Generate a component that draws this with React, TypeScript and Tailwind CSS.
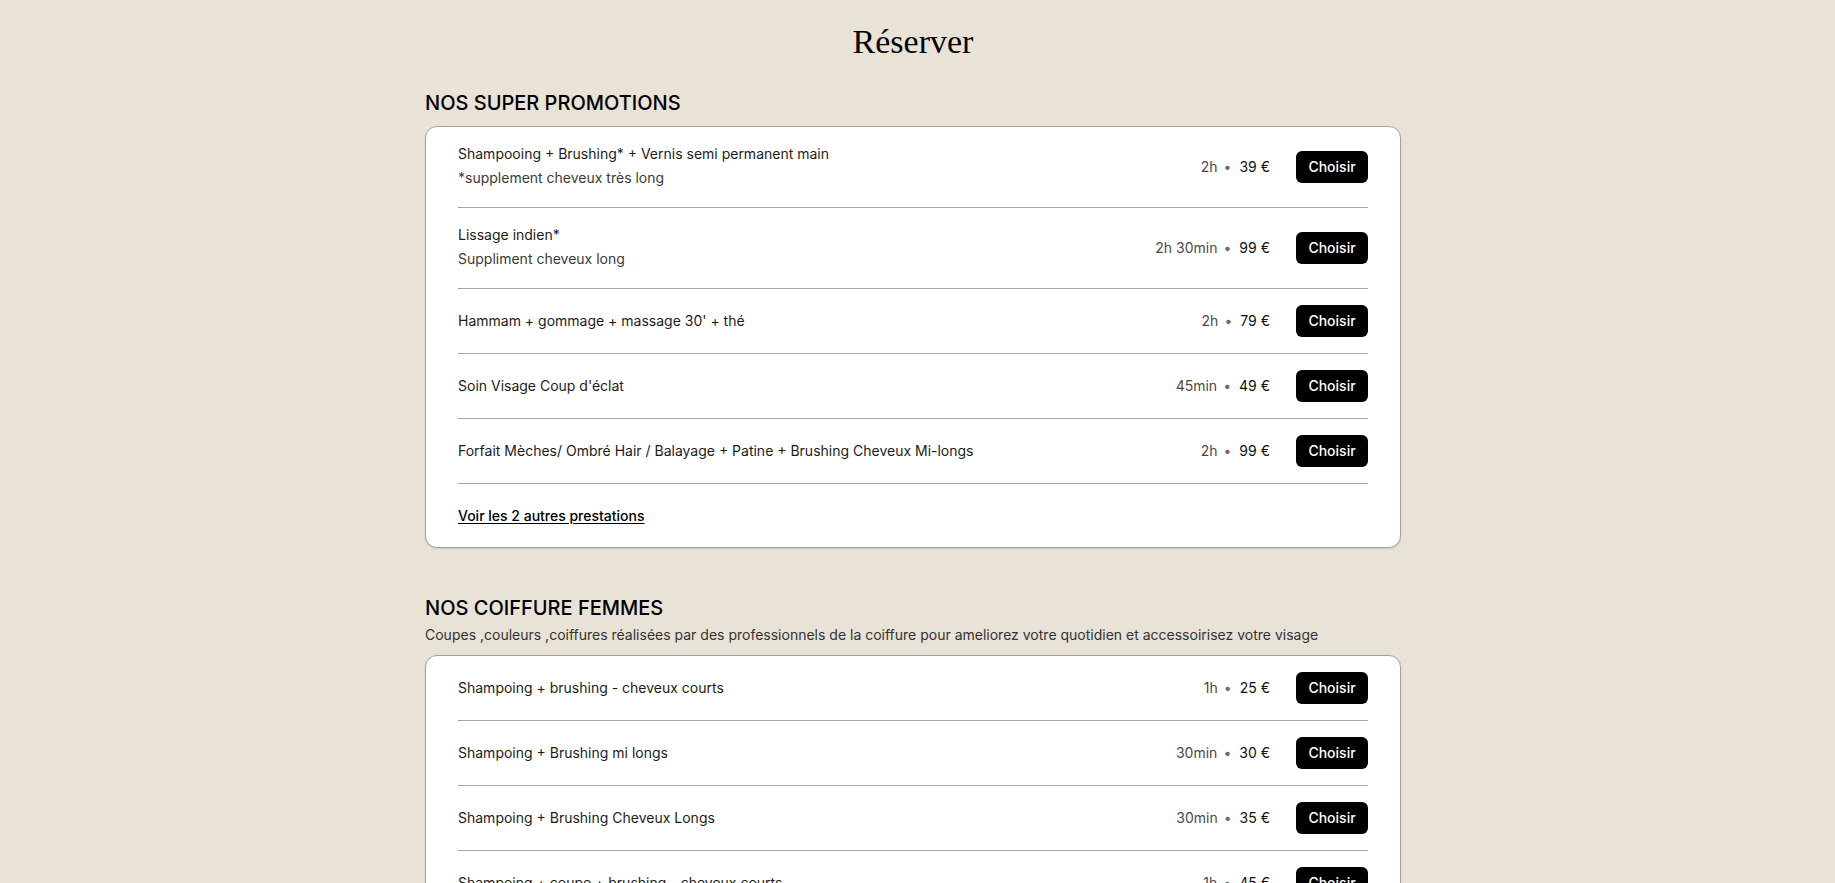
import React from "react";

interface Service {
  name: string;
  note?: string;
  duration: string;
  price: string;
}

const promos: Service[] = [
  {
    name: "Shampooing + Brushing* + Vernis semi permanent main",
    note: "*supplement cheveux très long",
    duration: "2h",
    price: "39 €",
  },
  {
    name: "Lissage indien*",
    note: "Suppliment cheveux long",
    duration: "2h 30min",
    price: "99 €",
  },
  { name: "Hammam + gommage + massage 30' + thé", duration: "2h", price: "79 €" },
  { name: "Soin Visage Coup d'éclat", duration: "45min", price: "49 €" },
  {
    name: "Forfait Mèches/ Ombré Hair / Balayage + Patine + Brushing Cheveux Mi-longs",
    duration: "2h",
    price: "99 €",
  },
];

const femmes: Service[] = [
  { name: "Shampoing + brushing - cheveux courts", duration: "1h", price: "25 €" },
  { name: "Shampoing + Brushing mi longs", duration: "30min", price: "30 €" },
  { name: "Shampoing + Brushing Cheveux Longs", duration: "30min", price: "35 €" },
  { name: "Shampoing + coupe + brushing - cheveux courts", duration: "1h", price: "45 €" },
  { name: "Shampoing + coupe + brushing - cheveux mi longs", duration: "1h", price: "55 €" },
  { name: "Shampoing + coupe + brushing - cheveux longs", duration: "1h 30min", price: "65 €" },
];

const Row = ({ s }: { s: Service }) => (
  <div className="flex items-center justify-between py-4 border-b border-[#a6a6a6]">
    {s.note ? (
      <div className="pt-px pb-[3px]">
        <div className="text-sm leading-5 text-[#1c1c1c]">{s.name}</div>
        <div className="mt-1 text-sm leading-5 text-[#3a3a3a]">{s.note}</div>
      </div>
    ) : (
      <div className="text-sm leading-5 text-[#1c1c1c]">{s.name}</div>
    )}
    <div className="flex items-center gap-[26px]">
      <div className="flex items-center text-sm leading-5">
        <span className="text-[#4a4a4a]">{s.duration}</span>
        <span className="ml-[6px] mr-[8px] text-[#6b6b6b]">•</span>
        <span className="text-[#111]">{s.price}</span>
      </div>
      <button className="h-8 w-[72px] rounded-md bg-black text-sm font-medium text-white">
        Choisir
      </button>
    </div>
  </div>
);

const Card = ({ children }: { children: React.ReactNode }) => (
  <div className="rounded-xl border border-[#a3a3a3] bg-white px-8 shadow-[0_1px_2px_rgba(0,0,0,0.12)]">
    {children}
  </div>
);

export default function App() {
  return (
    <div
      className="min-h-screen bg-[#e8e2d7] pr-[9px] text-black"
      style={{ fontFamily: "Inter, 'Noto Sans', sans-serif" }}
    >
      <div className="mx-auto w-[976px] pb-16">
        <h1
          className="pt-[22px] text-center text-[34px] leading-10 text-black"
          style={{ fontFamily: "'Liberation Serif', serif" }}
        >
          Réserver
        </h1>

        {/* Promotions */}
        <section className="mt-[27px]">
          <h2 className="mb-[9px] text-xl leading-7 font-medium">NOS SUPER PROMOTIONS</h2>
          <Card>
            {promos.map((s) => (
              <Row key={s.name} s={s} />
            ))}
            <div className="flex h-[63px] items-center">
              <a href="#" className="text-sm leading-5 font-medium text-black underline underline-offset-2">
                Voir les 2 autres prestations
              </a>
            </div>
          </Card>
        </section>

        {/* Coiffure femmes */}
        <section className="mt-[46px]">
          <h2 className="text-xl leading-7 font-medium">NOS COIFFURE FEMMES</h2>
          <p className="mt-[3px] mb-[10px] text-sm leading-5 text-[#333]">
            Coupes ,couleurs ,coiffures réalisées par des professionnels de la coiffure pour ameliorez votre
            quotidien et accessoirisez votre visage
          </p>
          <Card>
            {femmes.map((s) => (
              <Row key={s.name} s={s} />
            ))}
          </Card>
        </section>
      </div>
    </div>
  );
}
